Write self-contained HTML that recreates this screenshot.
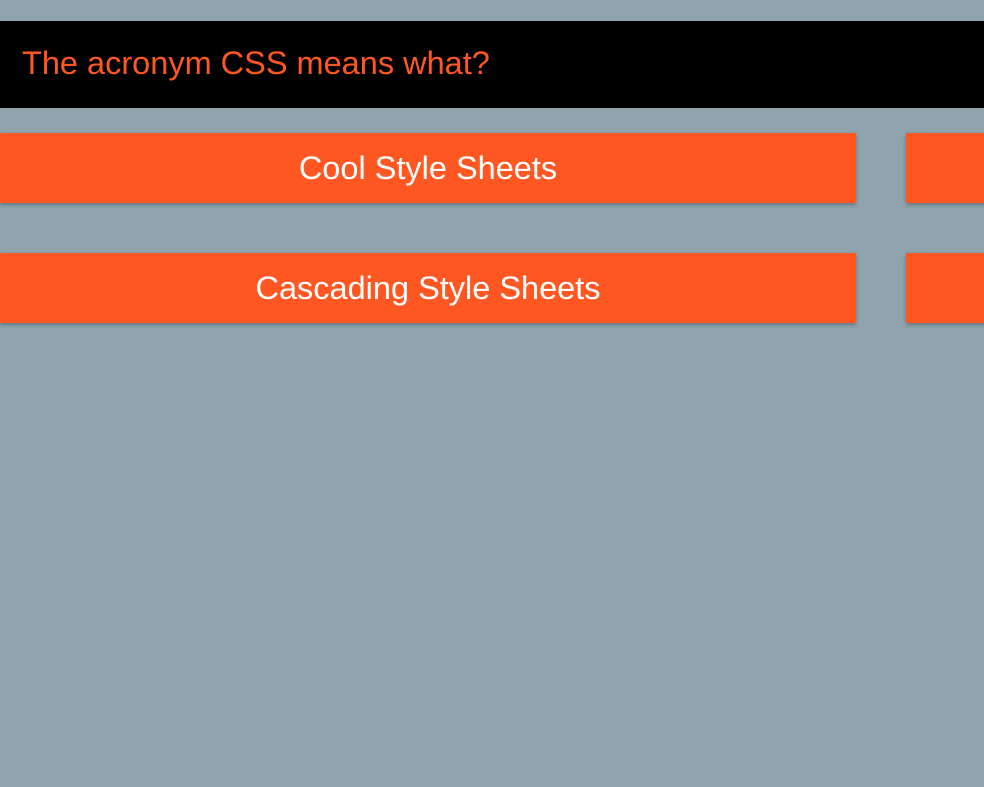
<!DOCTYPE html>
<html><head><style>
html,body{margin:0;padding:0;width:984px;height:787px;overflow:hidden;background:#90a4ae;font-family:"Liberation Sans",Arial,sans-serif;}
.q{position:absolute;left:0;top:21px;width:984px;height:87px;background:#000;color:#ff5722;font-size:32.5px;line-height:85px;padding-left:22px;box-sizing:border-box;}
.b{position:absolute;height:70px;background:#ff5722;color:#fff;font-size:32.5px;line-height:70px;text-align:center;box-shadow:0 2px 4px rgba(0,0,0,.3);}
</style></head><body>
<div class="q">The acronym CSS means what?</div>
<div class="b" style="left:0;top:133px;width:856px">Cool Style Sheets</div>
<div class="b" style="left:906px;top:133px;width:100px"></div>
<div class="b" style="left:0;top:253px;width:856px">Cascading Style Sheets</div>
<div class="b" style="left:906px;top:253px;width:100px"></div>
</body></html>
